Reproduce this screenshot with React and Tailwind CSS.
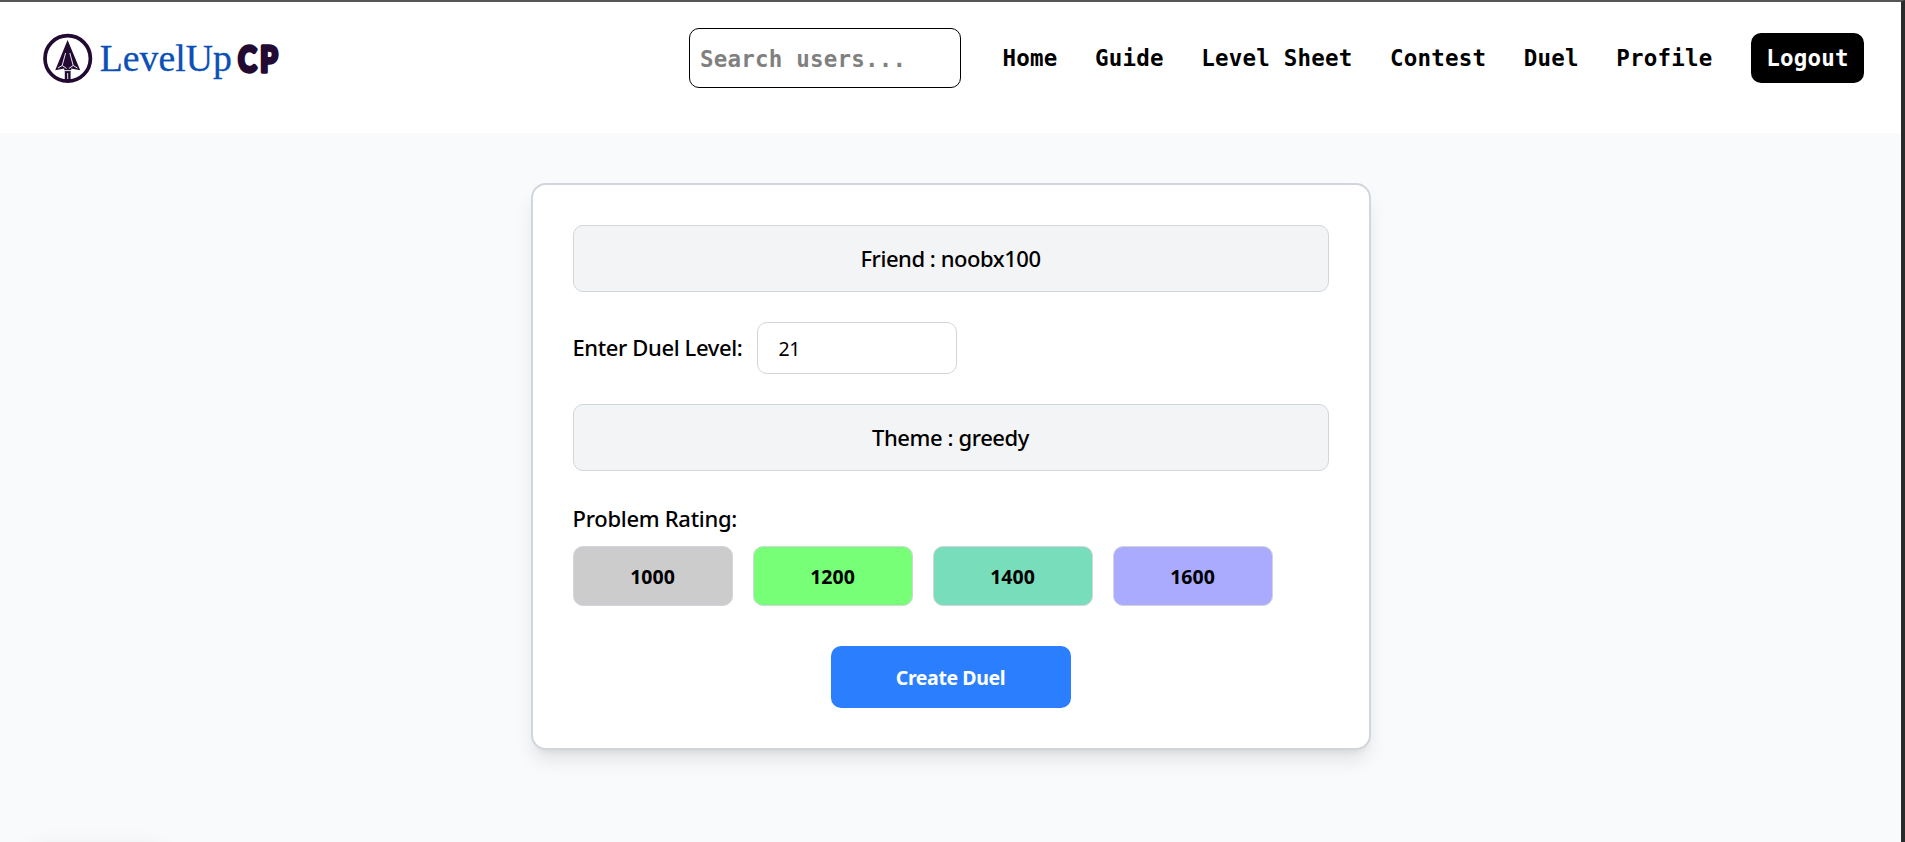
const ratings = [
  { value: 1000, color: 'bg-[#cccccc]' },
  { value: 1200, color: 'bg-[#77ff77]' },
  { value: 1400, color: 'bg-[#77ddbb]' },
  { value: 1600, color: 'bg-[#aaaaff]' },
];

const links = ['Home', 'Guide', 'Level Sheet', 'Contest', 'Duel', 'Profile'];

function Logo() {
  return (
    <svg width="250" height="60" viewBox="0 0 250 60" className="block shrink-0 font-normal tracking-normal" aria-label="LevelUp CP">
      <circle cx="27.7" cy="30.4" r="22.7" fill="none" stroke="#220a32" strokeWidth="3.7" />
      <path
        fill="#220a32"
        d="M27.6 12 L40.2 42.2 L31.2 40.4 L31.2 42.4 L30.6 43.6 L30.6 52.5 L24.8 52.5 L24.8 43.6 L24.2 42.4 L24.2 40.4 L15.2 42.2 Z"
      />
      <path d="M25.6 25 L22.2 37.5 L26.6 40.5 M29.8 25 L33.2 37.5 L28.8 40.5" fill="none" stroke="#fff" strokeWidth="0.9" />
      <path d="M22.2 37.5 L18 40 M33.2 37.5 L37.4 40" fill="none" stroke="#fff" strokeWidth="0.9" />
      <path d="M23.8 42.6 H31.6 M27.7 45 V51" fill="none" stroke="#fff" strokeWidth="0.9" />
      <text x="59.8" y="43.3" fontSize="38" textLength="132" lengthAdjust="spacingAndGlyphs" fill="#0b50b5" stroke="#0b50b5" strokeWidth="0.3" fontFamily="'Liberation Serif', serif">
        LevelUp
      </text>
      <g transform="translate(198 44.3) scale(0.8 1)">
        <text x="0 27.4" y="0" fontSize="35.5" fontWeight="900" fill="#220a32" stroke="#220a32" strokeWidth="3.4" strokeLinejoin="round" fontFamily="Lato, sans-serif">
          CP
        </text>
      </g>
    </svg>
  );
}

function Header() {
  return (
    <header className="flex h-[131px] items-start justify-between bg-white pr-[37px] pl-10 font-['DejaVu_Sans_Mono',monospace] text-[22.5px] font-bold tracking-[0.205px] text-black">
      <div className="pt-[26px]">
        <Logo />
      </div>
      <nav className="flex items-center pt-[26px]">
        <input
          type="text"
          placeholder="Search users..."
          className="mr-[41.5px] h-[60px] w-[272px] rounded-[10px] border border-black bg-white px-2.5 pt-px placeholder:text-[#808080]"
        />
        <div className="flex gap-[37.5px] pt-0.5">
          {links.map((label) => (
            <a key={label} className="whitespace-nowrap">
              {label}
            </a>
          ))}
        </div>
        <button className="ml-[38.5px] h-[50px] w-[113px] rounded-[10px] bg-black pt-0.5 text-white">Logout</button>
      </nav>
    </header>
  );
}

function InfoBox({ children }) {
  return (
    <div className="flex h-[67px] items-center justify-center rounded-[10px] border border-gray-300 bg-gray-100 text-[22px] font-medium">
      {children}
    </div>
  );
}

function DuelForm() {
  return (
    <section className="mt-[50px] flex h-[567px] w-[840px] flex-col rounded-[15px] border-2 border-gray-300 bg-white p-10 shadow-[0_12.5px_18.75px_-3.75px_rgba(0,0,0,0.1),0_5px_7.5px_-5px_rgba(0,0,0,0.1)]">
      <InfoBox>
        <span className="tracking-[-0.46px]">Friend : noobx100</span>
      </InfoBox>
      <div className="mt-[30px] flex h-[52px] items-center">
        <label className="w-[184px] pb-0.5 text-[22px] font-medium tracking-[-0.38px] whitespace-nowrap">Enter Duel Level:</label>
        <input
          type="text"
          defaultValue="21"
          className="h-[52px] w-[200px] rounded-[10px] border border-gray-300 bg-white px-[21px] text-[19.5px] tracking-[-0.4px]"
        />
      </div>
      <div className="mt-[30px]">
        <InfoBox>
          <span className="tracking-[-0.4px]">Theme : greedy</span>
        </InfoBox>
      </div>
      <p className="mt-[30px] h-[35px] text-[22px] leading-[35px] font-medium tracking-[-0.28px]">Problem Rating:</p>
      <div className="mt-[10px] flex gap-5">
        {ratings.map(({ value, color }) => (
          <button key={value} className={`h-[60px] w-[160px] rounded-[10px] border border-gray-300 pt-0.5 text-[19.5px] font-bold ${color}`}>
            {value}
          </button>
        ))}
      </div>
      <button className="mt-10 h-[62px] w-[240px] self-center rounded-[10px] bg-[#2b7fff] pt-0.5 text-[19.5px] font-bold tracking-[-0.4px] text-white">
        Create Duel
      </button>
    </section>
  );
}

export default function App() {
  return (
    <div className="relative flex h-[842px] w-[1905px] flex-col overflow-hidden border-t-2 border-r-4 border-t-[#575555] border-r-[#2b2b2b] bg-[#f9fafc] font-['Noto_Sans',sans-serif] text-black">
      <Header />
      <main className="flex justify-center">
        <DuelForm />
      </main>
      <div className="absolute top-[848px] left-8 h-6 w-[130px] shadow-[0_0_24px_rgba(0,0,0,0.09)]" />
    </div>
  );
}
